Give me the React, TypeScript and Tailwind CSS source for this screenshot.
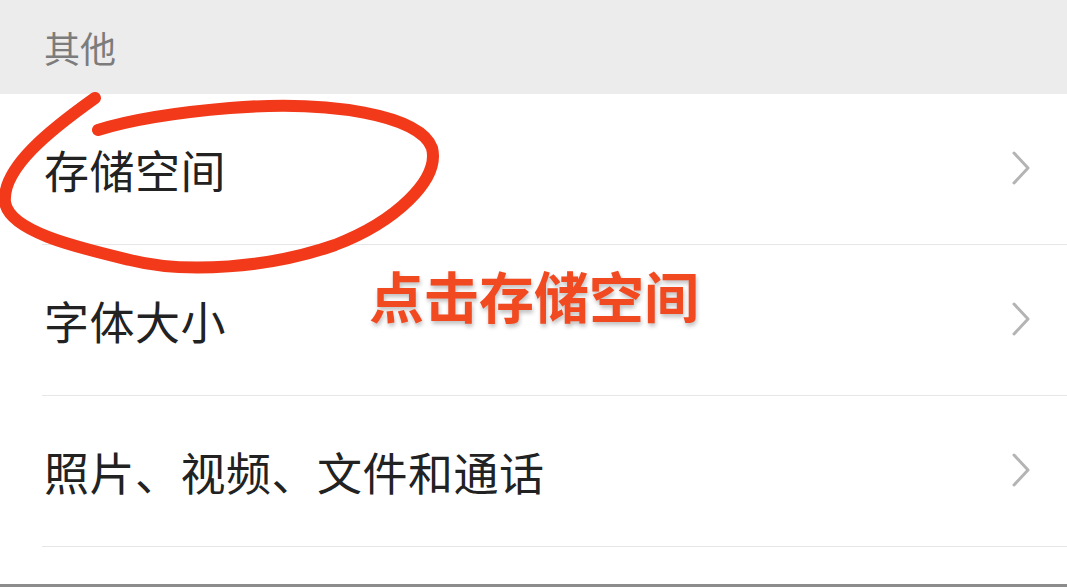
import React from "react";

const font = { fontFamily: '"Noto Sans CJK SC", "Noto Sans", sans-serif' };

function Chevron() {
  return (
    <svg width="20" height="36" viewBox="0 0 20 36" className="shrink-0 -mt-[3px]">
      <path d="M3 3 L17 18 L3 33" fill="none" stroke="#b4b4b4" strokeWidth="3" strokeLinecap="round" strokeLinejoin="round" />
    </svg>
  );
}

function Row({ label }: { label: string }) {
  return (
    <div className="pl-[42px]">
      <div className="flex h-[151px] items-center justify-between pr-[36px] border-b border-[#e6e6e6]">
        <span className="text-[45px] leading-none text-[#222] pl-[2px] tracking-[0.5px]">{label}</span>
        <Chevron />
      </div>
    </div>
  );
}

export default function App() {
  return (
    <div className="relative w-[1067px] h-[587px] overflow-hidden bg-white flex flex-col" style={font}>
      <div className="h-[94px] bg-[#ececec] flex items-center pl-[44px] shrink-0">
        <span className="text-[36px] leading-none text-[#7c7c7c]">其他</span>
      </div>
      <Row label="存储空间" />
      <Row label="字体大小" />
      <Row label="照片、视频、文件和通话" />
      <div className="flex-1" />
      <div className="h-[3px] bg-[#8c8c8c] shrink-0" />

      <svg className="absolute left-0 top-0 pointer-events-none" width="1067" height="587" viewBox="0 0 1067 587">
        <path
          d="M 95 98 C 50 130, 2 168, 5 202 C 9 232, 80 248, 130 260 C 185 274, 270 268, 335 245 C 395 222, 440 180, 432 148 C 420 115, 330 100, 230 108 C 170 113, 130 120, 98 130"
          fill="none"
          stroke="#f2391a"
          strokeWidth="12"
          strokeLinecap="round"
        />
      </svg>
      <div className="absolute left-[369px] top-[267px] text-[55px] leading-none font-bold text-[#f24a20] [text-shadow:1px_3px_4px_rgba(0,0,0,0.25)]">
        点击存储空间
      </div>
    </div>
  );
}
